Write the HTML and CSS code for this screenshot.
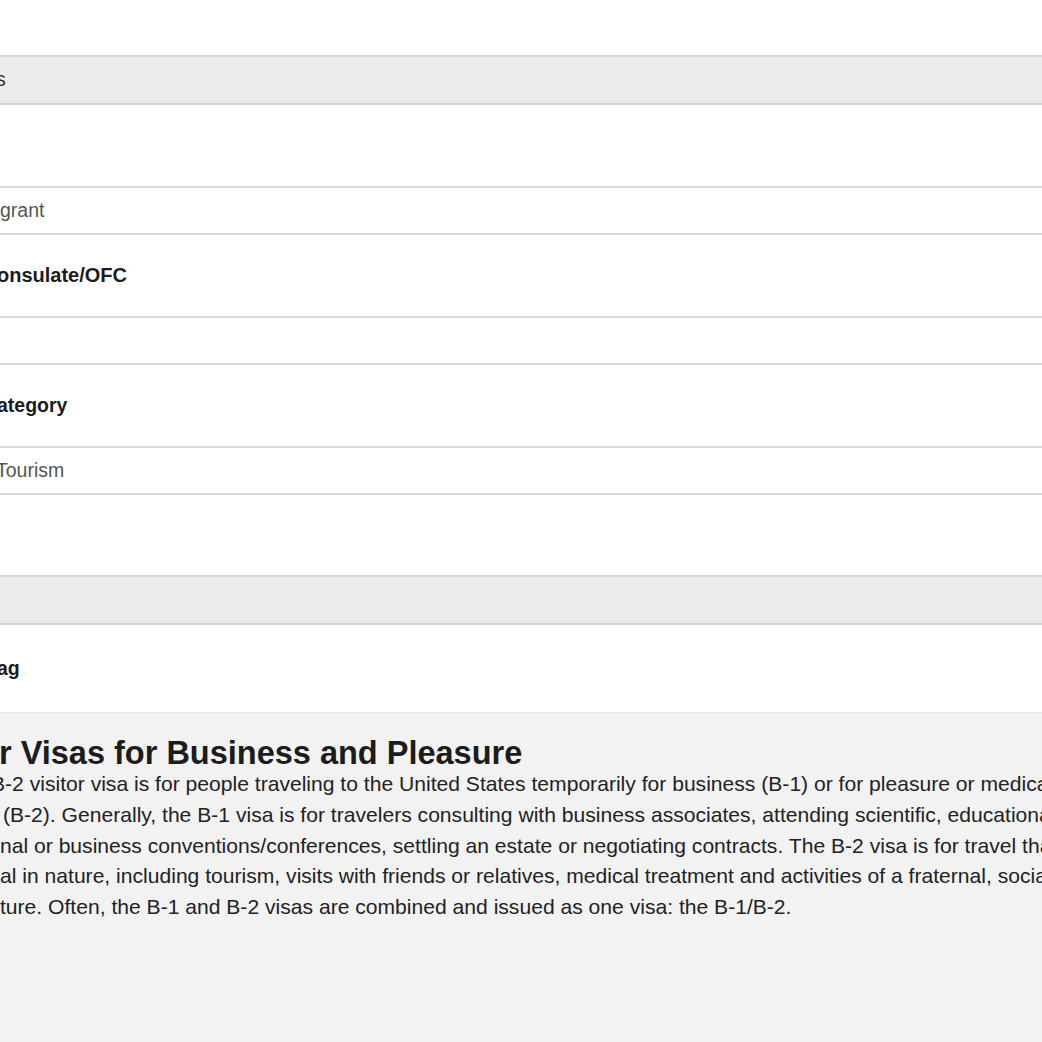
FILE: index.html
```html
<!DOCTYPE html>
<html lang="en">
<head>
<meta charset="utf-8">
<title>Appointment Details</title>
<link rel="stylesheet" href="styles.css">
</head>
<body>
<div class="page">
  <div class="top-space"></div>
  <div class="summary">
    <div class="bar"><span class="label-reg cut-s">s</span></div>
    <div class="section"></div>
    <div class="row"><span class="value">grant</span></div>
    <div class="section"><span class="label cut-o">onsulate/OFC</span></div>
    <div class="row"></div>
    <div class="section"><span class="label cut-a">ategory</span></div>
    <div class="row"><span class="value cut-t">Tourism</span></div>
    <div class="section short"></div>
    <div class="bar"></div>
    <div class="section tall"><span class="label cut-a">ag</span></div>
  </div>
  <div class="info">
    <h2 class="info-title">r Visas for Business and Pleasure</h2>
    <div class="info-text">
      <div class="line cut-b">B-2 visitor visa is for people traveling to the United States temporarily for business (B-1) or for pleasure or medical treatment</div>
      <div class="line pad">(B-2). Generally, the B-1 visa is for travelers consulting with business associates, attending scientific, educational, professional</div>
      <div class="line">nal or business conventions/conferences, settling an estate or negotiating contracts. The B-2 visa is for travel that is recreational</div>
      <div class="line">al in nature, including tourism, visits with friends or relatives, medical treatment and activities of a fraternal, social, or service</div>
      <div class="line">ture. Often, the B-1 and B-2 visas are combined and issued as one visa: the B-1/B-2.</div>
    </div>
  </div>
</div>
</body>
</html>
```
FILE: styles.css
```css
html, body {
  margin: 0;
  padding: 0;
  background: #f2f2f2;
  overflow: hidden;
}
body {
  font-family: "Liberation Sans", Arial, Helvetica, sans-serif;
  color: #222;
}
.page {
  width: 1042px;
  min-height: 1042px;
  overflow: hidden;
}
.top-space {
  height: 55px;
  background: #fff;
}
.summary {
  background: #fff;
}
.bar, .row, .section {
  border-top: 2px solid #d9d9d9;
  display: flex;
  align-items: center;
  box-sizing: border-box;
  font-size: 19.5px;
  line-height: 23px;
  white-space: nowrap;
}
.bar {
  height: 48px;
  background: #ececec;
  border-bottom: 1px solid #e4e4e4;
}
.bar + .section, .bar + .row {
  border-top-color: #d6d6d6;
}
.row {
  height: 47px;
  background: #fff;
}
.section {
  height: 83px;
  background: #fff;
}
.section.short {
  height: 82px;
}
.section.tall {
  height: 90px;
  border-bottom: 1px solid #e6e6e6;
}
.label {
  font-weight: bold;
  color: #1c1c1c;
}
.label.cut-o {
  font-size: 20px;
}
.label-reg {
  color: #333;
}
.value {
  color: #555;
}
.cut-s { margin-left: -4px; }
.cut-o { margin-left: -3px; }
.cut-a { margin-left: -3px; }
.cut-t { margin-left: -4px; }
.info {
  background: #f2f2f2;
  padding: 21px 0 0 0;
}
.info-title {
  margin: 0 0 0 -1px;
  font-size: 32.5px;
  line-height: 38px;
  font-weight: bold;
  color: #1c1c1c;
  white-space: nowrap;
}
.info-text {
  font-size: 21.1px;
  line-height: 30.75px;
  color: #222;
  margin-top: -3px;
}
.line {
  white-space: nowrap;
}
.line.cut-b { text-indent: -9px; }
.line.pad { padding-left: 3px; }
```
